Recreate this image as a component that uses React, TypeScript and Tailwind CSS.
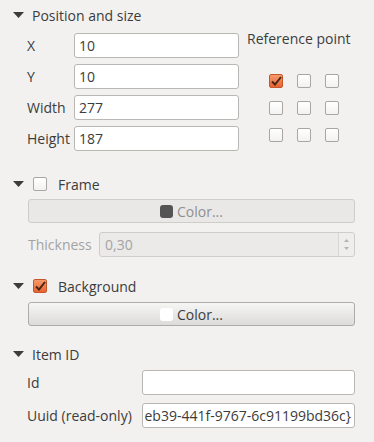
import React from 'react';

const font = { fontFamily: '"Open Sans", "Noto Sans", sans-serif' };

function Triangle() {
  return (
    <svg width="11" height="6" viewBox="0 0 11 6" className="shrink-0">
      <path d="M0 0 L11 0 L5.5 6 Z" fill="#3c3c3c" />
    </svg>
  );
}

function Check({ checked }: { checked?: boolean }) {
  if (checked) {
    return (
      <div className="w-[14px] h-[14px] shrink-0 rounded-[2px] border border-[#c4582b] bg-gradient-to-b from-[#f59a6c] to-[#e8622f] flex items-center justify-center">
        <svg width="11" height="10" viewBox="0 0 11 10">
          <path d="M1 5.5 L4 8.5 L10 1" stroke="#4a2414" strokeWidth="2" fill="none" />
        </svg>
      </div>
    );
  }
  return (
    <div className="w-[14px] h-[14px] shrink-0 rounded-[2px] border border-[#a9a6a2] bg-gradient-to-b from-[#ffffff] to-[#f3f2f1]" />
  );
}

function Header({ title, check }: { title: string; check?: 'on' | 'off' }) {
  return (
    <div className="flex items-center h-[16px] pl-[13px] text-[14px] text-[#3c3c3c]">
      <Triangle />
      {check ? (
        <>
          <div className="ml-[9px]">
            <Check checked={check === 'on'} />
          </div>
          <span className="ml-[11px]">{title}</span>
        </>
      ) : (
        <span className="ml-[8px]">{title}</span>
      )}
    </div>
  );
}

function Field({ value }: { value: string }) {
  return (
    <div className="w-[165px] h-[25px] rounded-[3px] border border-[#b9b7b4] bg-white flex items-center px-[4px] text-[14px] text-[#3c3c3c]">
      {value}
    </div>
  );
}

function ColorButton({ disabled }: { disabled?: boolean }) {
  return (
    <div
      className={
        'ml-[28px] w-[327px] h-[24px] rounded-[3px] border flex items-center justify-center gap-[4px] text-[14px] ' +
        (disabled
          ? 'border-[#cfcdca] bg-[#e9e8e7] text-[#8f8f8f]'
          : 'border-[#aeaca9] bg-gradient-to-b from-[#f6f6f5] to-[#dcdbda] text-[#3c3c3c]')
      }
    >
      <div
        className={
          'w-[13px] h-[13px] rounded-[3px] ' + (disabled ? 'bg-[#545454]' : 'bg-white')
        }
      />
      <span>Color...</span>
    </div>
  );
}

export default function App() {
  const rows = [
    ['X', '10'],
    ['Y', '10'],
    ['Width', '277'],
    ['Height', '187'],
  ];

  return (
    <div className="w-[374px] h-[442px] bg-[#f2f1f0] overflow-hidden" style={font}>
      {/* Position and size */}
      <div className="pt-[7px]">
        <Header title="Position and size" />
      </div>
      <div className="mt-[10px] flex pl-[27px]">
        <div className="flex flex-col gap-[6px]">
          {rows.map(([label, value]) => (
            <div key={label} className="flex items-center">
              <span className="w-[47px] text-[14px] text-[#3c3c3c]">{label}</span>
              <Field value={value} />
            </div>
          ))}
        </div>
        <div className="ml-[8px] -mt-[3px]">
          <div className="h-[16px] flex items-center text-[14px] text-[#3c3c3c] whitespace-nowrap">Reference point</div>
          <div className="mt-[28px] ml-[22px] grid grid-cols-3 gap-x-[14px] gap-y-[13px] w-max">
            {[0, 1, 2, 3, 4, 5, 6, 7, 8].map((i) => (
              <Check key={i} checked={i === 0} />
            ))}
          </div>
        </div>
      </div>

      {/* Frame */}
      <div className="mt-[25px]">
        <Header title="Frame" check="off" />
      </div>
      <div className="mt-[7px]">
        <ColorButton disabled />
      </div>
      <div className="mt-[9px] flex items-center pl-[28px]">
        <span className="w-[71px] text-[14px] text-[#a3a3a3]">Thickness</span>
        <div className="w-[256px] h-[25px] rounded-[3px] border border-[#cfcdca] bg-[#ebeae9] flex items-center">
          <span className="flex-1 px-[5px] text-[14px] text-[#a3a3a3]">0,30</span>
          <div className="w-[16px] h-full border-l border-[#d8d6d3] bg-[#efeeed] flex flex-col items-center justify-center gap-[5px] rounded-r-[3px]">
            <svg width="5" height="3" viewBox="0 0 5 3">
              <path d="M0 3 L2.5 0 L5 3 Z" fill="#b5b5b5" />
            </svg>
            <svg width="5" height="3" viewBox="0 0 5 3">
              <path d="M0 0 L5 0 L2.5 3 Z" fill="#b5b5b5" />
            </svg>
          </div>
        </div>
      </div>

      {/* Background */}
      <div className="mt-[21px]">
        <Header title="Background" check="on" />
      </div>
      <div className="mt-[8px]">
        <ColorButton />
      </div>

      {/* Item ID */}
      <div className="mt-[20px]">
        <Header title="Item ID" />
      </div>
      <div className="mt-[8px] flex items-center pl-[27px]">
        <span className="w-[115px] text-[14px] text-[#3c3c3c]">Id</span>
        <div className="w-[213px] h-[25px] rounded-[3px] border border-[#b9b7b4] bg-white" />
      </div>
      <div className="mt-[8px] flex items-center pl-[27px]">
        <span className="w-[115px] text-[14px] text-[#3c3c3c] whitespace-nowrap">Uuid (read-only)</span>
        <div className="w-[213px] h-[25px] rounded-[3px] border border-[#b9b7b4] bg-white flex items-center justify-end overflow-hidden pr-[3px] text-[14px] text-[#3c3c3c] whitespace-nowrap">
          <span>eb39-441f-9767-6c91199bd36c{'}'}</span>
        </div>
      </div>
    </div>
  );
}
